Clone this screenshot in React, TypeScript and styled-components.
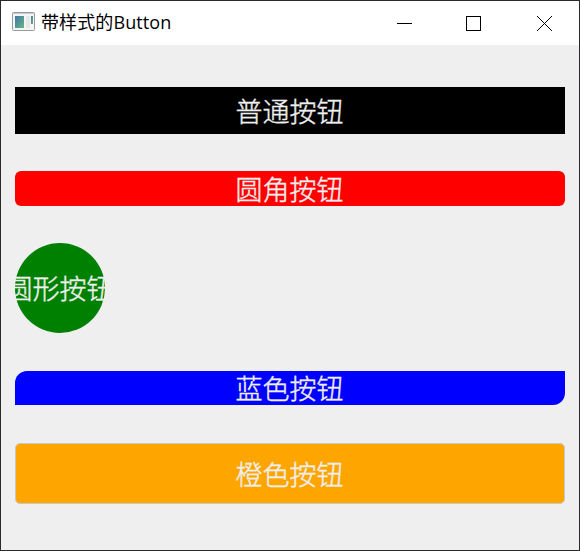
import React from "react";
import styled, { createGlobalStyle, css } from "styled-components";

const GlobalStyle = createGlobalStyle`
  * { box-sizing: border-box; }
  body { margin: 0; background: #efefef; }
`;

const Window = styled.div`
  display: flex;
  flex-direction: column;
  width: 580px;
  height: 551px;
  border: 1px solid #2b292c;
  background: #efefef;
  overflow: hidden;
  font-family: "Noto Sans CJK SC", sans-serif;
`;

const TitleBar = styled.header`
  display: flex;
  align-items: center;
  flex: 0 0 44px;
  padding-left: 11px;
  background: #fff;
`;

const AppIcon = styled.svg`
  display: block;
  width: 23px;
  height: 19px;
  margin-top: -3px;
`;

const Title = styled.h1`
  margin: -2px auto 0 6px;
  font-family: "Open Sans", "Noto Sans CJK SC", sans-serif;
  font-size: 18px;
  line-height: 26px;
  font-weight: 400;
  letter-spacing: 0.1px;
  color: #000;
  white-space: nowrap;
`;

const Controls = styled.div`
  display: flex;
  height: 44px;
`;

const ControlButton = styled.button<{ $nudge?: number }>`
  display: flex;
  align-items: center;
  justify-content: center;
  width: 70px;
  padding: 0 0 0 ${({ $nudge = 0 }) => $nudge}px;
  border: 0;
  background: transparent;
  svg { display: block; }
`;

const Content = styled.main`
  display: flex;
  flex-direction: column;
  padding: 42px 14px 0;
`;

type Shape = "plain" | "rounded" | "circle" | "leaf" | "outlined";

const shapes = {
  plain: css`
    height: 47px;
    margin-bottom: 37px;
    background: #000;
  `,
  rounded: css`
    height: 34.5px;
    margin-bottom: 37.5px;
    padding-top: 1px;
    border-radius: 6px;
    background: #f00;
  `,
  circle: css`
    width: 90px;
    height: 90px;
    margin-bottom: 38px;
    border-radius: 50%;
    background: #008000;
    clip-path: inset(0);
  `,
  leaf: css`
    height: 34px;
    margin-bottom: 38px;
    border-radius: 12px 0 12px 0;
    background: #00f;
  `,
  outlined: css`
    height: 60.5px;
    padding-top: 1px;
    border: 1.4px solid #c8c8c4;
    border-radius: 5px;
    background: #ffa500;
  `,
};

const StyledButton = styled.button<{ $shape: Shape }>`
  display: flex;
  align-items: center;
  justify-content: center;
  width: 550px;
  padding: 0 1px 0 0;
  border: 0;
  color: #efefef;
  font: 300 27px/34px "Noto Sans CJK SC", sans-serif;
  -webkit-text-stroke: 0.4px #efefef;
  white-space: nowrap;
  ${({ $shape }) => shapes[$shape]}
`;

const buttons: { shape: Shape; label: string }[] = [
  { shape: "plain", label: "普通按钮" },
  { shape: "rounded", label: "圆角按钮" },
  { shape: "circle", label: "圆形按钮" },
  { shape: "leaf", label: "蓝色按钮" },
  { shape: "outlined", label: "橙色按钮" },
];

export default function App() {
  return (
    <>
      <GlobalStyle />
      <Window>
        <TitleBar>
          <AppIcon viewBox="0 0 23 19">
            <defs>
              <linearGradient id="pane" x1="0" y1="0" x2="1" y2="1">
                <stop offset="0" stopColor="#4378a8" />
                <stop offset="1" stopColor="#65b584" />
              </linearGradient>
            </defs>
            <rect x=".5" y=".5" width="22" height="18" rx="1" fill="#f5f5f5" stroke="#969ba0" />
            <path d="M1 1.5h21" stroke="#c6cbd1" />
            <rect x="3" y="4" width="9" height="12" fill="url(#pane)" />
            <rect x="14" y="4" width="4" height="12" fill="#e8e8e8" />
            <rect x="19" y="4" width="2" height="8" fill="url(#pane)" />
          </AppIcon>
          <Title>带样式的Button</Title>
          <Controls>
            <ControlButton aria-label="最小化" $nudge={2}>
              <svg width="16" height="16" shapeRendering="crispEdges"><path d="M0 8.5h15" stroke="#000" /></svg>
            </ControlButton>
            <ControlButton aria-label="最大化">
              <svg width="16" height="16"><rect x=".5" y="1.5" width="14" height="14" fill="none" stroke="#000" /></svg>
            </ControlButton>
            <ControlButton aria-label="关闭" $nudge={2}>
              <svg width="16" height="16"><path d="M0 1l15 15M15 1l-15 15" stroke="#000" /></svg>
            </ControlButton>
          </Controls>
        </TitleBar>
        <Content>
          {buttons.map(({ shape, label }) => (
            <StyledButton key={shape} $shape={shape}>{label}</StyledButton>
          ))}
        </Content>
      </Window>
    </>
  );
}
